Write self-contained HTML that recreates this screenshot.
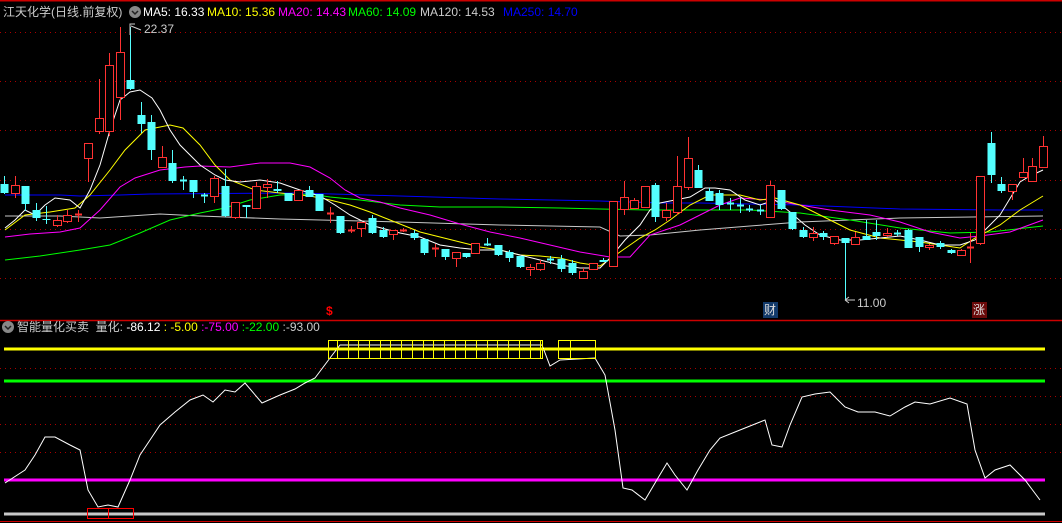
<!DOCTYPE html>
<html><head><meta charset="utf-8"><style>
body{margin:0;background:#000;width:1062px;height:523px;overflow:hidden;font-family:"Liberation Sans","Noto Sans CJK SC",sans-serif}
svg{position:absolute;left:0;top:0}
.t{position:absolute;font-size:12px;white-space:nowrap;line-height:14px}
</style></head><body>
<svg id="s" width="1062" height="523" xmlns="http://www.w3.org/2000/svg">
<line x1="0" y1="0.5" x2="1062" y2="0.5" stroke="#c00" stroke-width="2"/>
<g stroke="#a00" stroke-dasharray="1,4" stroke-width="1">
<line x1="0" y1="32.5" x2="1062" y2="32.5"/><line x1="0" y1="81.5" x2="1062" y2="81.5"/><line x1="0" y1="130.5" x2="1062" y2="130.5"/><line x1="0" y1="180.5" x2="1062" y2="180.5"/><line x1="0" y1="229.5" x2="1062" y2="229.5"/><line x1="0" y1="278.5" x2="1062" y2="278.5"/>
<line x1="0" y1="368.5" x2="1062" y2="368.5"/><line x1="0" y1="396.5" x2="1062" y2="396.5"/><line x1="0" y1="424.5" x2="1062" y2="424.5"/><line x1="0" y1="452.5" x2="1062" y2="452.5"/>
</g>
<line x1="0" y1="320.5" x2="1062" y2="320.5" stroke="#c00" stroke-width="1.5"/>
<line x1="0" y1="521.5" x2="1062" y2="521.5" stroke="#c00" stroke-width="1"/>
<g id="mas" fill="none" stroke-width="1"></g>
<g id="cs"></g>
<line x1="4" y1="349" x2="1045" y2="349" stroke="#ff0" stroke-width="3"/>
<line x1="4" y1="381" x2="1045" y2="381" stroke="#0f0" stroke-width="3"/>
<line x1="4" y1="480" x2="1045" y2="480" stroke="#f0f" stroke-width="3"/>
<line x1="4" y1="514" x2="1045" y2="514" stroke="#c8c8c8" stroke-width="3"/>
<polyline fill="none" stroke="#fff" stroke-width="1" points="5,483 25,470 35,455 45,437 55,437 70,445 80,450 88,490 98,507 108,505 118,507 130,480 140,455 150,440 160,425 175,412 190,400 203,395 213,402 225,390 235,392 245,383 262,403 280,395 295,389 305,383 315,378 330,358 340,345 542,345 550,366 560,360 595,358 605,375 615,430 623,488 632,490 645,500 658,478 667,463 675,475 687,490 698,470 710,450 720,438 735,432 750,426 765,420 772,445 782,447 790,425 802,397 815,394 830,392 845,407 858,412 875,412 890,416 905,407 915,402 930,404 950,398 967,404 975,450 985,478 995,470 1010,465 1025,480 1040,500"/>
<g id="bx" fill="none" stroke="#ff0" stroke-width="1"></g>
<rect x="87.5" y="508.5" width="46" height="10" fill="none" stroke="#f00"/>
<line x1="108.5" y1="508" x2="108.5" y2="519" stroke="#f00"/>
<path d="M130 35 V24 H135 M131 26 L141 30" stroke="#ccc" fill="none"/>
<path d="M845 300 L849 297 M845 300 L849 303 M845 300 H855" stroke="#ccc" fill="none"/>
<circle cx="135" cy="12" r="6" fill="#888"/><path d="M132 11 L135 14 L138 11" stroke="#222" fill="none" stroke-width="1.5"/>
<circle cx="8" cy="327" r="6" fill="#888"/><path d="M5 326 L8 329 L11 326" stroke="#222" fill="none" stroke-width="1.5"/>
<rect x="763" y="302" width="15" height="16" fill="#123a6a"/>
<rect x="972" y="302" width="15" height="16" fill="#6a0a0a"/>
</svg>
<div class="t" style="left:3px;top:5px;color:#ccc">江天化学(日线.前复权)</div>
<div class="t" style="left:143px;top:5px;color:#fff">MA5: 16.33</div>
<div class="t" style="left:207px;top:5px;color:#ff0">MA10: 15.36</div>
<div class="t" style="left:278px;top:5px;color:#f0f">MA20: 14.43</div>
<div class="t" style="left:348px;top:5px;color:#0f0">MA60: 14.09</div>
<div class="t" style="left:420px;top:5px;color:#ccc">MA120: 14.53</div>
<div class="t" style="left:503px;top:5px;color:#00f">MA250: 14.70</div>
<div class="t" style="left:144px;top:22px;color:#ccc">22.37</div>
<div class="t" style="left:857px;top:296px;color:#ccc">11.00</div>
<div class="t" style="left:326px;top:304px;color:#f00;font-weight:bold">$</div>
<div class="t" style="left:764px;top:303px;color:#ddd">财</div>
<div class="t" style="left:973px;top:303px;color:#ddd">涨</div>
<div class="t" style="left:17px;top:320px;color:#ccc">智能量化买卖&nbsp;&nbsp;量化: <span style="color:#fff">-86.12</span> <span style="color:#ff0">: -5.00</span> <span style="color:#f0f">:-75.00</span> <span style="color:#0f0">:-22.00</span> <span style="color:#ccc">:-93.00</span></div>
<script>
var C=[[4,184,193,176,194,0],[15,185,193,176,198,1],[25,186,204,186,211,0],[36,210,218,203,221,0],[46,219,220,206,224,0],[57,220,225,215,227,1],[67,215,221,210,223,1],[78,214,214,210,222,1],[88,143,158,143,182,1],[99,118,131,79,134,1],[109,65,131,53,136,1],[120,52,97,27,120,1],[130,80,89,27,90,0],[141,115,124,102,133,0],[151,122,150,115,160,0],[162,157,167,146,167,1],[172,163,181,150,183,0],[183,180,180,176,190,0],[193,180,192,180,198,0],[204,195,195,193,203,0],[214,178,196,176,203,1],[225,186,216,169,217,0],[235,202,217,202,219,1],[246,205,207,205,218,0],[256,186,208,182,208,1],[267,184,187,179,198,1],[277,189,191,181,193,0],[288,193,201,193,201,0],[298,190,200,190,200,1],[309,190,197,186,197,0],[319,194,211,194,211,0],[330,213,213,207,223,1],[340,216,233,216,234,0],[351,230,230,226,233,1],[361,222,228,222,237,1],[372,218,233,215,234,0],[383,230,237,227,238,0],[393,230,234,230,240,1],[403,230,230,228,232,1],[414,233,238,230,240,0],[424,239,253,239,255,0],[435,248,248,244,257,1],[445,249,257,249,260,0],[456,252,258,252,267,1],[466,253,257,253,258,0],[475,243,253,243,253,1],[487,244,244,238,246,0],[498,245,255,245,256,0],[509,252,258,250,262,0],[520,256,267,256,268,0],[530,267,269,264,276,1],[540,263,269,260,271,1],[550,259,259,256,264,0],[561,259,269,255,272,0],[572,263,273,260,275,0],[583,271,278,268,278,1],[593,263,269,263,269,1],[603,260,262,258,262,0],[613,201,266,201,266,1],[624,197,209,181,215,1],[634,200,208,198,208,1],[645,186,207,186,207,1],[655,185,217,183,222,0],[666,210,217,203,221,1],[677,186,212,156,215,1],[688,158,187,137,190,1],[698,170,188,165,188,0],[709,191,201,188,201,0],[719,193,205,190,210,0],[730,203,203,198,210,0],[740,205,205,198,213,0],[749,209,209,205,212,0],[760,210,210,205,215,0],[770,185,217,181,217,1],[781,190,209,190,210,0],[792,212,229,212,230,0],[803,230,237,227,238,0],[813,233,237,227,241,1],[823,233,237,231,240,0],[834,236,243,236,245,1],[845,238,243,238,300,0],[855,237,244,232,244,1],[866,236,240,220,240,0],[876,232,236,220,240,0],[887,233,235,228,237,1],[897,233,233,230,236,0],[908,230,248,229,248,0],[919,237,247,237,252,0],[929,245,247,244,250,1],[940,243,247,241,249,0],[951,250,253,249,254,0],[961,250,255,249,255,1],[970,247,247,233,263,1],[980,176,243,176,245,1],[991,143,175,132,183,0],[1001,184,191,177,193,0],[1012,184,191,184,200,1],[1023,172,177,158,177,1],[1032,166,181,158,181,1],[1043,146,167,136,167,1]];
var h='';C.forEach(function(c){var col=c[5]?'#ff3232':'#54ffff';var x=c[0];
h+='<line x1="'+(x+.5)+'" y1="'+c[3]+'" x2="'+(x+.5)+'" y2="'+c[4]+'" stroke="'+col+'"/>';
if(c[2]-c[1]<1)h+='<line x1="'+(x-3)+'" y1="'+(c[1]+.5)+'" x2="'+(x+4)+'" y2="'+(c[1]+.5)+'" stroke="'+col+'" stroke-width="2"/>';
else if(c[5])h+='<rect x="'+(x-3.5)+'" y="'+(c[1]+.5)+'" width="8" height="'+(c[2]-c[1])+'" fill="#000" stroke="'+col+'"/>';
else h+='<rect x="'+(x-3.5)+'" y="'+c[1]+'" width="8" height="'+(c[2]-c[1])+'" fill="'+col+'"/>';});
document.getElementById('cs').innerHTML=h;
var M=[['#c8c8c8','5,216 60,216 100,218 130,216 160,214 200,216 280,219 400,222 500,225 600,227 620,236 650,235 700,230 750,226 800,222 900,218 1043,216'],
['#0000ff','5,195 60,195 80,196 120,195 150,194 300,193 400,196 500,199 600,201 660,203 700,203 800,205 900,209 1000,210 1043,210'],
['#00ff00','5,260 40,256 80,250 110,245 140,233 170,220 200,213 225,208 250,200 280,195 310,194 330,197 360,200 400,205 440,207 500,207 560,208 600,209 650,210 700,210 750,210 800,213 850,220 900,228 950,233 990,232 1043,226'],
['#ff00ff','5,237 30,234 60,232 80,228 100,210 120,187 135,178 160,170 185,167 200,166 230,167 260,163 290,163 310,167 330,178 345,190 360,198 380,202 400,208 430,215 460,224 490,232 520,238 550,245 580,252 610,257 630,257 650,235 680,225 700,215 720,205 740,198 770,200 800,205 830,210 870,215 900,222 930,232 960,238 980,236 1010,232 1043,220'],
['#ffff00','5,230 25,215 50,212 75,208 90,195 110,170 125,150 145,130 170,125 183,128 200,145 215,165 230,180 255,190 280,193 310,196 330,200 350,205 370,212 390,220 420,232 440,237 460,242 480,247 500,250 520,255 540,256 560,258 580,263 600,266 620,252 640,238 655,230 670,220 690,205 710,195 740,195 760,200 775,198 800,205 830,220 850,230 880,238 920,242 960,248 975,238 1000,225 1020,210 1043,196'],
['#ffffff','5,228 15,220 25,210 35,215 45,205 55,198 70,200 80,208 90,190 100,165 110,130 120,100 130,92 140,90 152,98 160,110 170,130 180,145 190,155 200,165 215,175 225,180 240,182 260,180 280,183 300,190 320,196 335,205 350,215 370,225 400,233 420,237 440,245 460,248 480,250 500,250 520,255 540,260 560,265 580,268 600,268 610,258 625,240 640,225 650,210 660,203 675,200 690,197 705,188 715,188 730,190 745,200 760,205 775,200 790,212 805,225 820,235 840,240 860,240 880,238 900,236 920,240 940,245 960,245 975,240 985,230 1000,215 1020,182 1030,176 1043,170']];
var m='';M.forEach(function(a){m+='<polyline points="'+a[1]+'" stroke="'+a[0]+'"/>';});
document.getElementById('mas').innerHTML=m;
var b='<rect x="328.5" y="340.5" width="214" height="18"/><rect x="558.5" y="340.5" width="37" height="18"/><line x1="328" y1="349.5" x2="596" y2="349.5"/>';
for(var x=337;x<542;x+=10.7)b+='<line x1="'+Math.round(x)+'.5" y1="340" x2="'+Math.round(x)+'.5" y2="358"/>';
b+='<line x1="570.5" y1="340" x2="570.5" y2="358"/>';
document.getElementById('bx').innerHTML=b;
</script>
</body></html>
